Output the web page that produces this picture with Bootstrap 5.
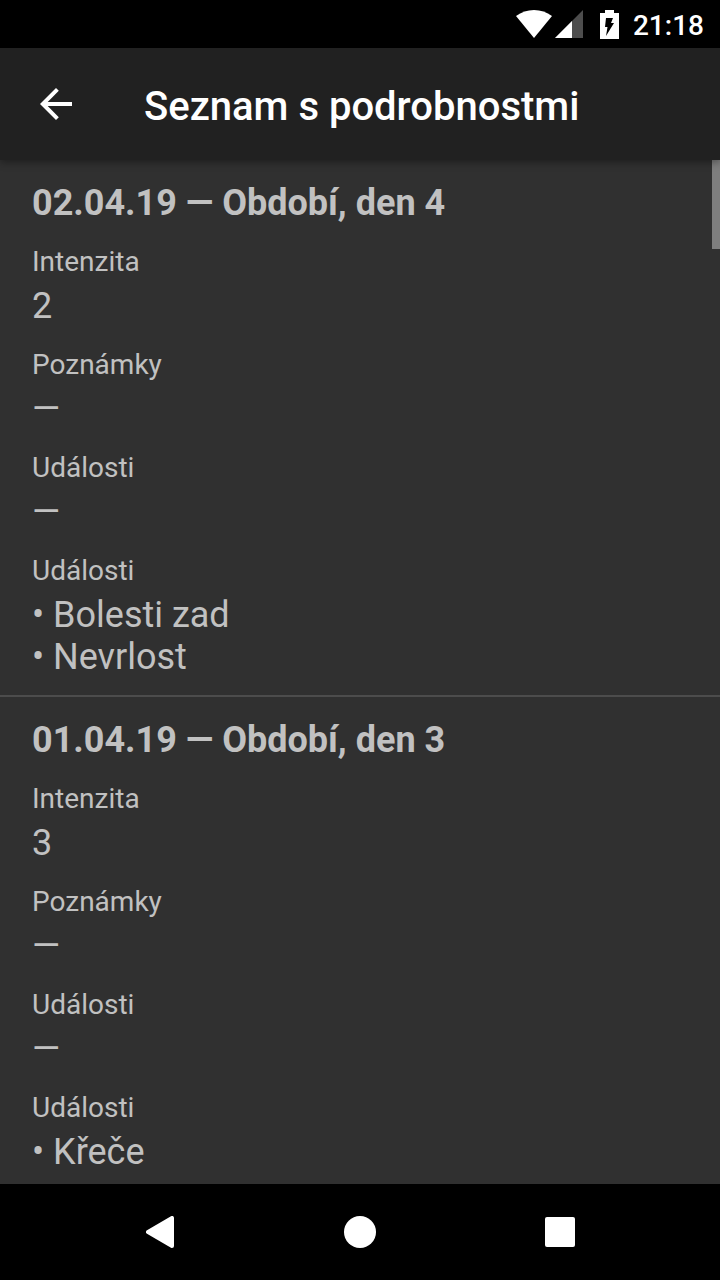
<!DOCTYPE html>
<html lang="cs" data-bs-theme="dark">
<head>
<meta charset="utf-8">
<meta name="viewport" content="width=device-width, initial-scale=1">
<title>Seznam s podrobnostmi</title>
<link href="https://cdn.jsdelivr.net/npm/bootstrap@5.3.0/dist/css/bootstrap.min.css" rel="stylesheet">
<style>
  body { font-family: Roboto, sans-serif; background: #303030; color: #c1c1c1; }
  svg { display: block; }
  .status-bar { height: 48px; padding: 0 16px; font-size: 28px; line-height: 32px; font-weight: 500; }
  .status-bar .clock { padding: 3px 0 0 14px; }
  .status-icons { gap: 3px; margin-right: 17px; }
  .app-bar { height: 112px; background: #212121; padding: 0 32px; box-shadow: 0 2px 8px rgba(0, 0, 0, .4); z-index: 2; }
  .app-bar h1 { font-size: 40px; line-height: 48px; font-weight: 500; margin: 0 0 0 72px; padding-top: 6px; color: #fff; }
  .entries { min-height: 0; }
  .entry { padding: 22px 32px 17px; }
  .entry + .entry { border-top: 2px solid #4c4c4c; }
  .entry h2 { font-size: 36px; line-height: 42px; font-weight: 700; margin: 0; color: #c1c1c1; }
  .entry dl { margin: 0; }
  .entry dt { font-size: 28px; line-height: 33px; font-weight: 400; margin: 21px 0 7px; }
  .entry dd { font-size: 36px; line-height: 42px; margin: 0; }
  .scroll-thumb { width: 8px; height: 89px; background: #7e7e7e; }
  .nav-keys { height: 96px; gap: 120px; }
  .nav-keys .btn { width: 80px; height: 80px; }
</style>
</head>
<body>
<div class="d-flex flex-column vh-100 overflow-hidden">
  <div class="status-bar bg-black text-white d-flex align-items-center justify-content-end flex-shrink-0">
    <div class="status-icons d-flex">
      <svg width="36" height="28" viewBox="0 0 36 28" fill="#fff" aria-label="Wi-Fi"><path d="M0 6Q8 0 18 0T36 6L18 28Z"/></svg>
      <svg width="28" height="28" viewBox="0 0 28 28" aria-label="Signál"><path d="M28 0V28H0Z" fill="#4d4d4d"/><path d="M17 11V28H0Z" fill="#fff"/></svg>
    </div>
    <svg width="19" height="29" viewBox="0 0 19 29" aria-label="Nabíjení"><path d="M5 0H14V3H19V29H0V3H5Z" fill="#fff"/><path d="M6 8H13L11 13H14L6 26L7.500 17H5Z" fill="#000"/></svg>
    <span class="clock">21:18</span>
  </div>
  <header class="app-bar text-white d-flex align-items-center flex-shrink-0 position-relative">
    <button type="button" class="btn border-0 p-0 ms-2" aria-label="Zpět">
      <svg width="32" height="32" viewBox="0 0 32 32" fill="#fff"><path d="M32 14V18H7.700L18.800 29.200L16 32L0 16L16 0L18.800 2.800L7.700 14Z"/></svg>
    </button>
    <h1 class="text-nowrap">Seznam s podrobnostmi</h1>
  </header>
  <main class="entries flex-grow-1 overflow-hidden position-relative">
    <article class="entry">
      <h2>02.04.19 — Období, den 4</h2>
      <dl>
        <dt>Intenzita</dt><dd>2</dd>
        <dt>Poznámky</dt><dd>—</dd>
        <dt>Události</dt><dd>—</dd>
        <dt>Události</dt><dd>• Bolesti zad</dd><dd>• Nevrlost</dd>
      </dl>
    </article>
    <article class="entry">
      <h2>01.04.19 — Období, den 3</h2>
      <dl>
        <dt>Intenzita</dt><dd>3</dd>
        <dt>Poznámky</dt><dd>—</dd>
        <dt>Události</dt><dd>—</dd>
        <dt>Události</dt><dd>• Křeče</dd>
      </dl>
    </article>
    <div class="scroll-thumb position-absolute top-0 end-0"></div>
  </main>
  <nav class="nav-keys bg-black d-flex align-items-center justify-content-center flex-shrink-0" aria-label="Systémová navigace">
    <button type="button" class="btn border-0 p-0 d-flex align-items-center justify-content-center" aria-label="Zpět">
      <svg width="28" height="32" viewBox="0 0 28 32"><path d="M2 16L26 2V30Z" fill="#fff" stroke="#fff" stroke-width="4" stroke-linejoin="round"/></svg>
    </button>
    <button type="button" class="btn border-0 p-0 d-flex align-items-center justify-content-center" aria-label="Domů">
      <svg width="32" height="32" viewBox="0 0 32 32"><circle cx="16" cy="16" r="16" fill="#fff"/></svg>
    </button>
    <button type="button" class="btn border-0 p-0 d-flex align-items-center justify-content-center" aria-label="Přehled">
      <svg width="30" height="30" viewBox="0 0 30 30"><rect width="30" height="30" rx="2" fill="#fff"/></svg>
    </button>
  </nav>
</div>
<script src="https://cdn.jsdelivr.net/npm/bootstrap@5.3.0/dist/js/bootstrap.bundle.min.js"></script>
</body>
</html>
